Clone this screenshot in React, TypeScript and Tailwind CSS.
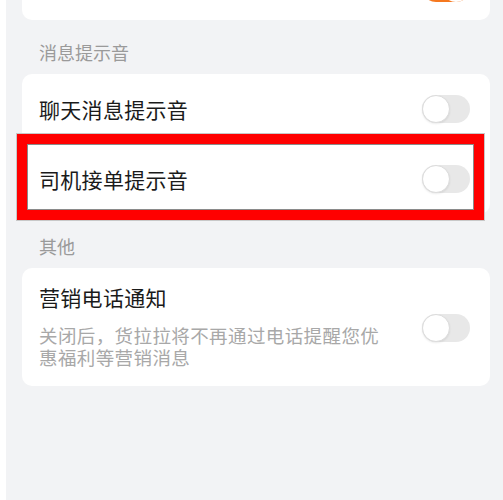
import React from 'react';

const font = { fontFamily: '"Noto Sans CJK SC", "Noto Sans", sans-serif' };

function Toggle({ on = false }: { on?: boolean }) {
  return (
    <div
      className={
        on
          ? 'relative w-[48px] h-[28px] rounded-full bg-[#f5781f] shrink-0'
          : 'relative w-[48px] h-[28px] rounded-full bg-[#e8e8e8] shrink-0'
      }
    >
      <div
        className={
          on
            ? 'absolute right-0 top-0 w-[28px] h-[28px] rounded-full bg-white'
            : 'absolute left-0 top-0 w-[28px] h-[28px] rounded-full bg-white border border-[#dcdcdc] shadow-[0_1px_2px_rgba(0,0,0,0.08)]'
        }
      />
    </div>
  );
}

function SectionLabel({ children }: { children: React.ReactNode }) {
  return (
    <div className="h-[54px] pt-[20px] pl-[17px] text-[18px] leading-[24px] text-[#9a9a9a]">{children}</div>
  );
}

function Row({ title, highlight = false }: { title: string; highlight?: boolean }) {
  return (
    <div className="relative h-[70px] flex items-center justify-between pl-[17px] pr-[20px]">
      <span className="text-[21px] leading-[28px] text-[#1a1a1a] tracking-[0.3px]">{title}</span>
      <Toggle />
      {highlight && (
        <div className="absolute left-[-5px] right-[6px] top-[-10px] bottom-[-6px] border-[10px] border-[#ff0000] shadow-[0_0_0_1px_#c8c8c8]">
          <div className="absolute inset-0 shadow-[inset_0_0_0_1px_#8a8a8a]" />
        </div>
      )}
    </div>
  );
}

export default function App() {
  return (
    <div className="w-[503px] h-[500px] flex bg-white overflow-hidden" style={font}>
      <div className="w-[6px] bg-white" />
      <div className="flex-1 bg-[#f2f3f5] pl-[16px] pr-[13px]">
        <div className="h-[20px] bg-white rounded-b-[10px] overflow-hidden flex justify-end pr-[20px]">
          <div className="mt-[-26px]">
            <Toggle on />
          </div>
        </div>

        <SectionLabel>消息提示音</SectionLabel>
        <div className="bg-white rounded-[10px]">
          <Row title="聊天消息提示音" />
          <Row title="司机接单提示音" highlight />
        </div>

        <SectionLabel>其他</SectionLabel>
        <div className="bg-white rounded-[10px] pl-[17px] pr-[20px] pt-[15px] pb-[18px] flex items-start justify-between">
          <div className="flex flex-col">
            <span className="text-[21px] leading-[28px] text-[#1a1a1a] tracking-[0.3px]">营销电话通知</span>
            <span className="mt-[13px] text-[18.5px] leading-[22px] text-[#a8a8a8] tracking-[0.4px]">
              关闭后，货拉拉将不再通过电话提醒您优
              <br />
              惠福利等营销消息
            </span>
          </div>
          <div className="mt-[31px]">
            <Toggle />
          </div>
        </div>
      </div>
    </div>
  );
}
